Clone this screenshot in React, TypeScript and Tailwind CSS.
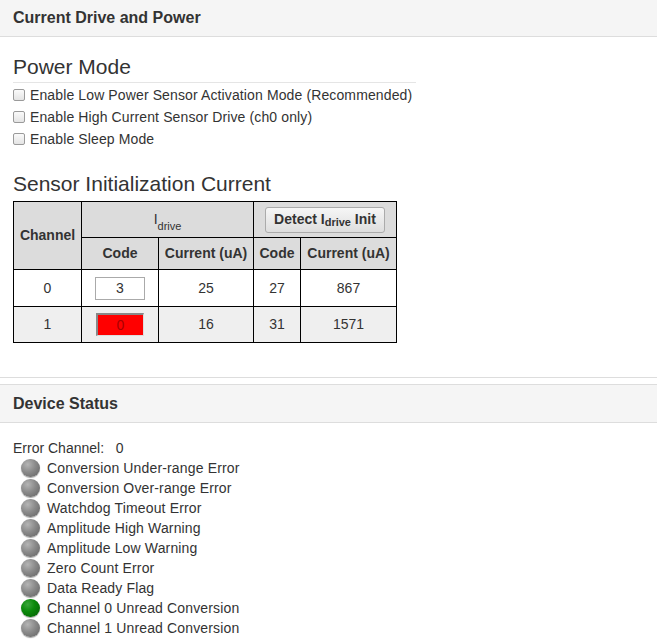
import React from "react";

const Led = ({ on }: { on?: boolean }) => (
  <span
    className={
      "inline-block w-[19px] h-[18px] rounded-full shadow-[0_1px_1px_rgba(0,0,0,0.35)] " +
      (on
        ? "bg-[radial-gradient(circle_at_35%_30%,#3aa63a_0%,#0b8a0b_40%,#045a04_100%)]"
        : "bg-[radial-gradient(circle_at_35%_30%,#b5b5b5_0%,#8a8a8a_45%,#5f5f5f_100%)]")
    }
  />
);

const Checkbox = ({ label }: { label: string }) => (
  <label className="flex items-center h-[22px]">
    <span className="inline-block w-[12px] h-[12px] rounded-[2px] border border-[#9a9a9a] bg-[linear-gradient(#fafafa,#e4e4e4)] mr-[5px]" />
    <span className="tracking-[0.12px]">{label}</span>
  </label>
);

const Sub = () => (
  <>
    I<sub className="text-[11px] align-[-3px]">drive</sub>
  </>
);

export default function App() {
  const leds: [string, boolean][] = [
    ["Conversion Under-range Error", false],
    ["Conversion Over-range Error", false],
    ["Watchdog Timeout Error", false],
    ["Amplitude High Warning", false],
    ["Amplitude Low Warning", false],
    ["Zero Count Error", false],
    ["Data Ready Flag", false],
    ["Channel 0 Unread Conversion", true],
    ["Channel 1 Unread Conversion", false],
  ];
  const cell = "border border-black text-center";
  return (
    <div className="w-[664px] h-[644px] overflow-hidden bg-white text-[#333] text-[14px] font-['Liberation_Sans',Arial,sans-serif]">
      <div className="w-[657px] border-b border-[#ddd]">
        <div className="h-[37px] bg-[#f5f5f5] border-b border-[#ddd] px-[13px] flex items-center font-bold text-[16px]">
          Current Drive and Power
        </div>
        <div className="px-[13px] pt-[15px] pb-[34px]">
          <div className="w-[403px] border-b border-[#e5e5e5] text-[21px] leading-[29px] pb-[1px]">Power Mode</div>
          <div className="pt-[1px]">
            <Checkbox label="Enable Low Power Sensor Activation Mode (Recommended)" />
            <Checkbox label="Enable High Current Sensor Drive (ch0 only)" />
            <Checkbox label="Enable Sleep Mode" />
          </div>
          <div className="text-[21px] leading-[28px] mt-[20px] mb-[3px]">Sensor Initialization Current</div>
          <table className="border-collapse border border-black">
            <tbody>
              <tr className="h-[36px] bg-[#dcdcdc] font-bold">
                <td rowSpan={2} className={cell + " w-[68px]"}>Channel</td>
                <td colSpan={2} className={cell + " font-normal"}><Sub /></td>
                <td colSpan={2} className={cell}>
                  <span className="inline-flex items-center justify-center h-[26px] px-[8px] rounded-[3px] border border-[#ababab] bg-[linear-gradient(#f6f6f6,#dedede)] text-[14px]">
                    Detect&nbsp;<Sub />&nbsp;Init
                  </span>
                </td>
              </tr>
              <tr className="h-[32px] bg-[#dcdcdc] font-bold">
                <td className={cell + " w-[77px]"}>Code</td>
                <td className={cell + " w-[95px]"}>Current (uA)</td>
                <td className={cell + " w-[47px]"}>Code</td>
                <td className={cell + " w-[96px]"}>Current (uA)</td>
              </tr>
              <tr className="h-[37px]">
                <td className={cell}>0</td>
                <td className={cell}>
                  <div className="mx-auto w-[50px] h-[23px] border border-[#aaa] flex items-center justify-center">3</div>
                </td>
                <td className={cell}>25</td>
                <td className={cell}>27</td>
                <td className={cell}>867</td>
              </tr>
              <tr className="h-[36px] bg-[#efefef]">
                <td className={cell}>1</td>
                <td className={cell}>
                  <div className="mx-auto w-[48px] h-[23px] bg-[#ff0000] border-t-2 border-l-2 border-b border-r border-t-[#888] border-l-[#888] border-b-[#ddd] border-r-[#ddd] flex items-center justify-center text-[#a00]">0</div>
                </td>
                <td className={cell}>16</td>
                <td className={cell}>31</td>
                <td className={cell}>1571</td>
              </tr>
            </tbody>
          </table>
        </div>
      </div>
      <div className="w-[657px] mt-[6px] border-t border-[#ddd]">
        <div className="h-[38px] bg-[#f5f5f5] border-b border-[#ddd] px-[13px] flex items-center font-bold text-[16px]">
          Device Status
        </div>
        <div className="px-[13px] pt-[15px]">
          <div className="leading-[20px]">Error Channel:&nbsp;&nbsp; 0</div>
          {leds.map(([t, on]) => (
            <div key={t} className="flex items-center h-[20px] pl-[8px]">
              <Led on={on} />
              <span className="ml-[7px] tracking-[0.15px]">{t}</span>
            </div>
          ))}
        </div>
      </div>
    </div>
  );
}
